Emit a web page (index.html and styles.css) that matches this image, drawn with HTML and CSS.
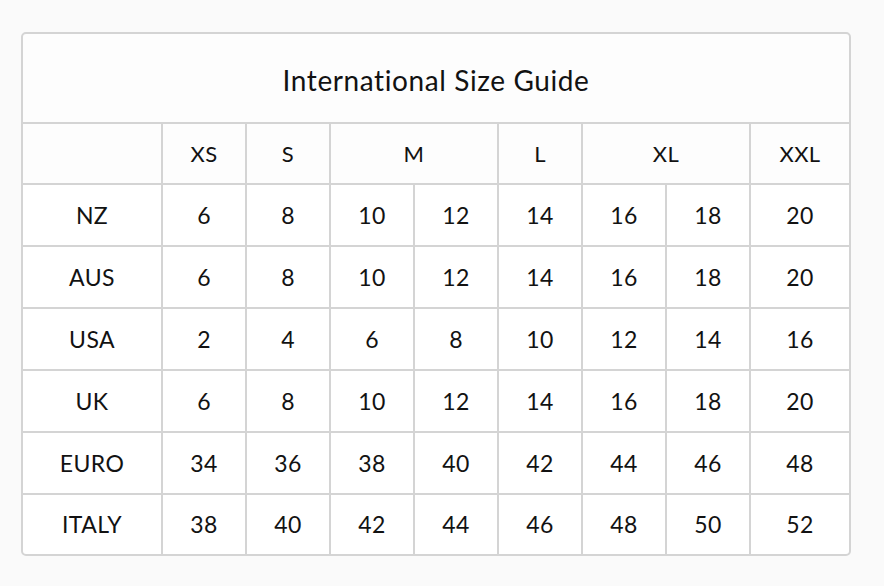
FILE: index.html
```html
<!DOCTYPE html>
<html lang="en">
<head>
<meta charset="utf-8">
<title>International Size Guide</title>
<link rel="stylesheet" href="styles.css">
</head>
<body>
<div class="guide">
  <div class="cell title">International Size Guide</div>

  <div class="cell head"></div>
  <div class="cell head">XS</div>
  <div class="cell head">S</div>
  <div class="cell head span2">M</div>
  <div class="cell head">L</div>
  <div class="cell head span2">XL</div>
  <div class="cell head">XXL</div>

  <div class="cell">NZ</div><div class="cell">6</div><div class="cell">8</div><div class="cell">10</div><div class="cell">12</div><div class="cell">14</div><div class="cell">16</div><div class="cell">18</div><div class="cell">20</div>
  <div class="cell">AUS</div><div class="cell">6</div><div class="cell">8</div><div class="cell">10</div><div class="cell">12</div><div class="cell">14</div><div class="cell">16</div><div class="cell">18</div><div class="cell">20</div>
  <div class="cell">USA</div><div class="cell">2</div><div class="cell">4</div><div class="cell">6</div><div class="cell">8</div><div class="cell">10</div><div class="cell">12</div><div class="cell">14</div><div class="cell">16</div>
  <div class="cell">UK</div><div class="cell">6</div><div class="cell">8</div><div class="cell">10</div><div class="cell">12</div><div class="cell">14</div><div class="cell">16</div><div class="cell">18</div><div class="cell">20</div>
  <div class="cell">EURO</div><div class="cell">34</div><div class="cell">36</div><div class="cell">38</div><div class="cell">40</div><div class="cell">42</div><div class="cell">44</div><div class="cell">46</div><div class="cell">48</div>
  <div class="cell">ITALY</div><div class="cell">38</div><div class="cell">40</div><div class="cell">42</div><div class="cell">44</div><div class="cell">46</div><div class="cell">48</div><div class="cell">50</div><div class="cell">52</div>
</div>
</body>
</html>
```

FILE: styles.css
```css
html, body {
  margin: 0;
  padding: 0;
  background: #fafafa;
}

body {
  padding: 32px 0 0 21px;
  font-family: Lato, "Open Sans", sans-serif;
  color: #121212;
}

.guide {
  display: grid;
  width: 830px;
  box-sizing: border-box;
  grid-template-columns: 138px repeat(7, 82px) 98px;
  grid-template-rows: 88px 59px repeat(5, 60px) 59px;
  gap: 2px;
  background: #d4d4d4;
  border: 2px solid #d4d4d4;
  border-radius: 5px;
  overflow: hidden;
}

.cell {
  display: flex;
  align-items: center;
  justify-content: center;
  background: #ffffff;
  font-size: 23px;
  letter-spacing: 0.4px;
  line-height: 1;
}

.title {
  grid-column: 1 / -1;
  background: #fdfdfd;
  font-size: 28px;
  letter-spacing: 0.6px;
  padding-top: 3px;
}

.head {
  background: #fdfdfd;
  font-size: 22px;
}

.span2 {
  grid-column: span 2;
}
```
